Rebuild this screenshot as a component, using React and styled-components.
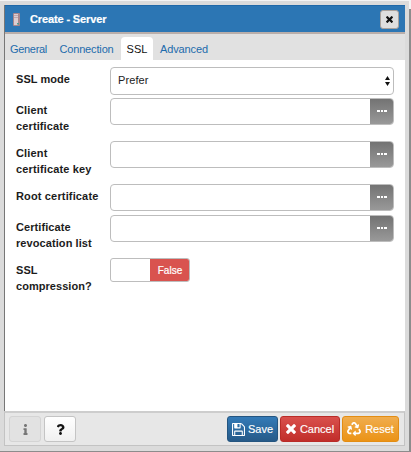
import React from 'react';
import styled, { createGlobalStyle } from 'styled-components';
import { FaRecycle, FaInfo, FaQuestion } from 'react-icons/fa';

const GlobalStyle = createGlobalStyle`
  * { box-sizing: border-box; }
  body { margin: 0; background: #fff; overflow: hidden; font-family: "Liberation Sans", Arial, sans-serif; }
  button { font-family: inherit; margin: 0; }
`;

const Frame = styled.div`
  width: 411px;
  height: 452px;
  padding: 4px 4px 5px 4px;
  background: #dbdbdb;
  border-top: 1px solid #f4f4f4;
  border-right: 2px solid;
  border-image: linear-gradient(#f4f4f4 9px, #8c8c8c 9px) 1 2 1 0;
  border-bottom: 1px solid #8c8c8c;
`;

const Dialog = styled.div`
  display: flex;
  flex-direction: column;
  width: 401px;
  height: 441px;
  background: #fff;
  border-left: 1px solid #777;
`;

const TitleBar = styled.header`
  display: flex;
  align-items: center;
  height: 29px;
  flex: none;
  padding: 0 6px 0 8px;
  background: #2c76b4;
  border-top: 1px solid #2068a8;
  border-bottom: 2px solid #b9aeaa;
`;

const Title = styled.h1`
  flex: 1;
  margin: 0 0 0 10px;
  font-size: 11px;
  line-height: 16px;
  letter-spacing: -0.13px;
  color: #fff;
  -webkit-text-stroke: 0.2px #fff;
`;

const CloseButton = styled.button`
  display: grid;
  place-items: center;
  width: 19px;
  height: 19px;
  padding: 0;
  border: 1px solid #a9a29d;
  border-radius: 3px;
  background: #dfdfdf;
  color: #111;
`;

const TabBar = styled.nav`
  display: flex;
  align-items: flex-end;
  flex: none;
  height: 26px;
  background: #e1e1e1;
`;

const Tab = styled.a`
  width: ${(p) => p.$width}px;
  height: 23px;
  font-size: 11px;
  line-height: 24px;
  letter-spacing: ${(p) => p.$tracking ?? 0}px;
  text-align: center;
  white-space: nowrap;
  border-radius: 4px 4px 0 0;
  color: ${(p) => (p.$active ? '#111' : '#1d6bac')};
  background: ${(p) => (p.$active ? '#fff' : 'transparent')};
`;

const Form = styled.main`
  flex: 1;
  padding: 7px 10px 0 11px;
`;

const Row = styled.div`
  display: flex;
  align-items: flex-start;
  height: ${(p) => p.$height}px;
`;

const Label = styled.label`
  width: 94.5px;
  flex: none;
  padding-top: 4px;
  font-size: 11px;
  font-weight: 700;
  line-height: 16px;
  letter-spacing: ${(p) => p.$tracking ?? 0.05}px;
  white-space: pre;
  color: #1c1c1c;
`;

const Control = styled.div`
  display: flex;
  width: 284px;
  height: ${(p) => p.$height ?? 27}px;
  margin-left: -0.5px;
  border: 1px solid #bdbdbd;
  border-radius: 4px;
  overflow: hidden;
  background: #fff;
`;

const SelectValue = styled.span`
  flex: 1;
  padding-left: 7px;
  font-size: 11px;
  line-height: 25px;
  letter-spacing: 0.1px;
  color: #222;
`;

const SelectArrows = styled.svg`
  width: 5px;
  height: 10px;
  margin: 8px 3px 0 0;
`;

const BrowseButton = styled.button`
  display: flex;
  align-items: center;
  justify-content: center;
  gap: 1px;
  width: 24px;
  height: 27px;
  margin: -1px -1px -1px auto;
  padding: 0 0 2px 0;
  border: 0;
  border-bottom: 1px solid #5d5d5d;
  border-top: 1px solid #707070;
  background: linear-gradient(#737373, #999);
`;

const Dot = styled.i`
  width: 2.4px;
  height: 2px;
  background: #fff;
`;

const Switch = styled.div`
  display: flex;
  width: 80px;
  height: 24px;
  margin-left: -0.5px;
  border: 1px solid #bdbdbd;
  border-radius: 3px;
  overflow: hidden;
  background: #fff;
`;

const SwitchLabel = styled.span`
  width: 40px;
  height: 24px;
  margin: -1px -1px -1px auto;
  font-size: 10px;
  line-height: 25px;
  text-align: center;
  color: #fff;
  background: #d9534f;
  -webkit-text-stroke: 0.2px #fff;
`;

const Footer = styled.footer`
  display: flex;
  align-items: flex-start;
  flex: none;
  height: 35px;
  margin-left: -1px;
  padding: 3px 5px 0 4px;
  background: #e7e7e7;
  border: 1px solid #c3c3c3;
  border-top: 2px solid #cdcdcd;
`;

const HelpButton = styled.button`
  display: grid;
  place-items: center;
  width: 32px;
  height: 26px;
  margin-right: 3px;
  padding: 0;
  border: 1px solid ${(p) => (p.$muted ? '#d4d4d4' : '#c4c4c4')};
  border-radius: 3px;
  color: ${(p) => (p.$muted ? '#777' : '#151515')};
  background: ${(p) => (p.$muted ? '#e2e2e2' : 'linear-gradient(#fff, #f0f0f0)')};
`;

const Spacer = styled.div`
  flex: 1;
`;

const tones = {
  save: ['#337ab7', '#265a88', '#245580'],
  cancel: ['#d9504c', '#c12e2a', '#b92c28'],
  reset: ['#f0ad4e', '#eb9316', '#e38d13'],
};

const ActionButton = styled.button`
  display: flex;
  align-items: center;
  justify-content: center;
  gap: ${(p) => p.$gap}px;
  width: ${(p) => p.$width}px;
  height: 26px;
  margin-left: 2px;
  padding: 0;
  border: 1px solid ${(p) => tones[p.$tone][2]};
  border-radius: 3px;
  background: linear-gradient(${(p) => tones[p.$tone][0]}, ${(p) => tones[p.$tone][1]});
  color: #fff;
  font-size: 11px;
  -webkit-text-stroke: 0.15px #fff;
`;

const CrossIcon = ({ size }) => (
  <svg width={size} height={size} viewBox="302 366 1188 1188" fill="currentColor">
    <path d="M1490 1322q0 40-28 68l-136 136q-28 28-68 28t-68-28l-294-294-294 294q-28 28-68 28t-68-28l-136-136q-28-28-28-68t28-68l294-294-294-294q-28-28-28-68t28-68l136-136q28-28 68-28t68 28l294 294 294-294q28-28 68-28t68 28l136 136q28 28 28 68t-28 68l-294 294 294 294q28 28 28 68z" />
  </svg>
);

const FloppyIcon = () => (
  <svg width="13" height="13" viewBox="0 128 1536 1536" fill="currentColor">
    <path d="M384 1536h768v-384h-768v384zM1280 1536h128v-896q0-14-10-38.5t-20-34.5l-281-281q-10-10-34-20t-39-10v416q0 40-28 68t-68 28h-576q-40 0-68-28t-28-68v-416h-128v1280h128v-416q0-40 28-68t68-28h832q40 0 68 28t28 68v416zM896 608v-320q0-13-9.5-22.5t-22.5-9.5h-192q-13 0-22.5 9.5t-9.5 22.5v320q0 13 9.5 22.5t22.5 9.5h192q13 0 22.5-9.5t9.5-22.5zM1536 640v928q0 40-28 68t-68 28h-1344q-40 0-68-28t-28-68v-1344q0-40 28-68t68-28h928q40 0 88 20t76 48l280 280q28 28 48 76t20 88z" />
  </svg>
);

const ServerIcon = () => (
  <svg width="7" height="13" viewBox="0 0 7 13">
    <rect x="0" y="0" width="7" height="13" rx="1" fill="#a8878d" />
    <rect x="1" y="1" width="4" height="11" fill="#dccdd1" />
    <path d="M1 2.5h4M1 4.5h4" stroke="#b298a0" strokeWidth=".7" />
    <rect x="4" y="10" width="2" height="1.5" fill="#4f9c91" />
  </svg>
);

const FileField = () => (
  <Control>
    <BrowseButton aria-label="Browse">
      <Dot /><Dot /><Dot />
    </BrowseButton>
  </Control>
);

const fileRows = [
  { label: 'Client\ncertificate', height: 43, tracking: 0.12 },
  { label: 'Client\ncertificate key', height: 43, tracking: 0.15 },
  { label: 'Root certificate', height: 31, tracking: 0.15 },
  { label: 'Certificate\nrevocation list', height: 43, tracking: 0.08 },
];

export default function App() {
  return (
    <>
      <GlobalStyle />
      <Frame>
        <Dialog>
          <TitleBar>
            <ServerIcon />
            <Title>Create - Server</Title>
            <CloseButton aria-label="Close"><CrossIcon size={7} /></CloseButton>
          </TitleBar>
          <TabBar>
            <Tab $width={47} $tracking={-0.3}>General</Tab>
            <Tab $width={69} $tracking={-0.15}>Connection</Tab>
            <Tab $width={32} $active>SSL</Tab>
            <Tab $width={62} $tracking={-0.1}>Advanced</Tab>
          </TabBar>
          <Form>
            <Row $height={31}>
              <Label>SSL mode</Label>
              <Control $height={28}>
                <SelectValue>Prefer</SelectValue>
                <SelectArrows viewBox="0 0 5 10"><path d="M2.5 0L5 4H0zM2.5 10L0 6h5z" fill="#111" /></SelectArrows>
              </Control>
            </Row>
            {fileRows.map((row) => (
              <Row key={row.label} $height={row.height}>
                <Label $tracking={row.tracking}>{row.label}</Label>
                <FileField />
              </Row>
            ))}
            <Row $height={43}>
              <Label>{'SSL\ncompression?'}</Label>
              <Switch><SwitchLabel>False</SwitchLabel></Switch>
            </Row>
          </Form>
          <Footer>
            <HelpButton $muted aria-label="Information"><FaInfo size={11} /></HelpButton>
            <HelpButton aria-label="Help"><FaQuestion size={11} /></HelpButton>
            <Spacer />
            <ActionButton $tone="save" $width={51} $gap={3}><FloppyIcon />Save</ActionButton>
            <ActionButton $tone="cancel" $width={60} $gap={4}><CrossIcon size={10} />Cancel</ActionButton>
            <ActionButton $tone="reset" $width={57} $gap={4}><FaRecycle size={14} />Reset</ActionButton>
          </Footer>
        </Dialog>
      </Frame>
    </>
  );
}
